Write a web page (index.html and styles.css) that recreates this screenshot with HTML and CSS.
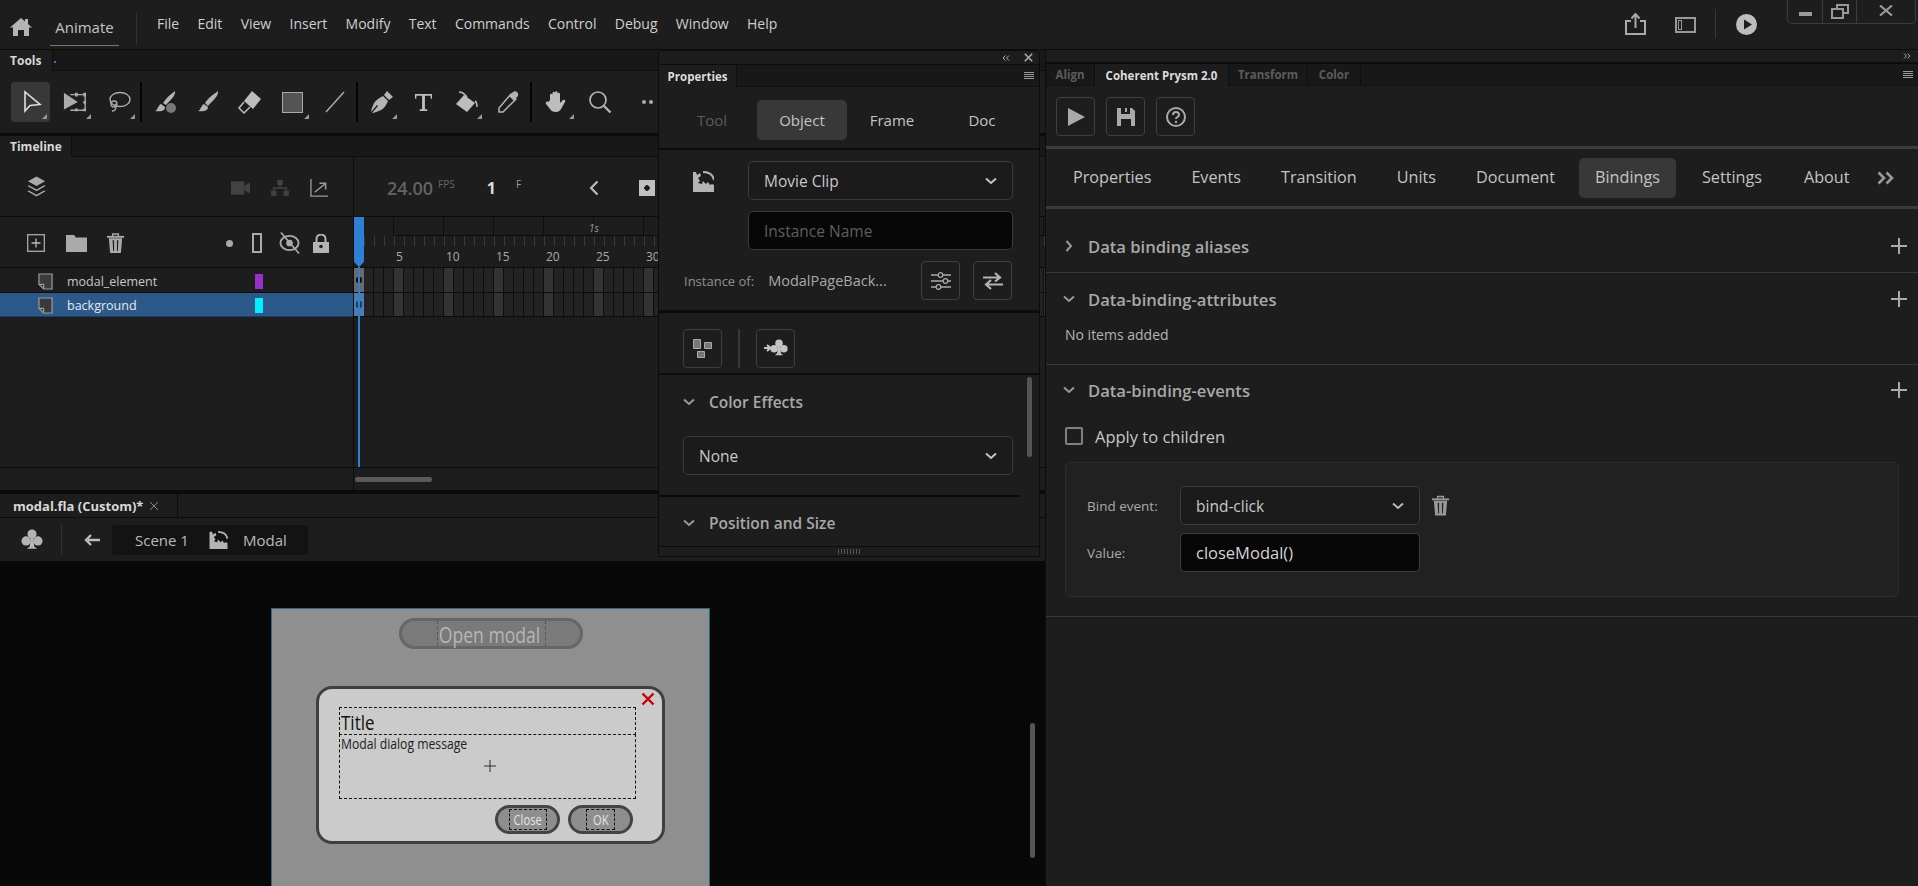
FILE: index.html
```html
<!DOCTYPE html>
<html lang="en">
<head>
<meta charset="utf-8">
<title>Animate</title>
<link rel="stylesheet" href="styles.css">
</head>
<body>
<svg class="defs" width="0" height="0" aria-hidden="true">
  <symbol id="chev" viewBox="0 0 12 8"><path d="M1 1.500l5 4.500 5-4.500" fill="none" stroke="currentColor" stroke-width="2"/></symbol>
  <symbol id="trash" viewBox="0 0 20 22"><path d="M1 4.500h18" stroke="currentColor" stroke-width="2"/><path d="M7 4V1.500h6V4" fill="none" stroke="currentColor" stroke-width="1.500"/><path d="M3 6l1.300 15.500h11.400L17 6zM7 8l.5 11.500h1L8.500 8zM11.500 8l0 11.500h1L13 8z" fill="currentColor" fill-rule="evenodd"/></symbol>
  <symbol id="clip" viewBox="0 0 21 21"><path d="M0 1h3l1 3 3-2 1 3-3 2 2 3-2 2 4 1 1-3 3 3 2-2 2 3 2-1 2 1v7H0z" fill="currentColor"/><path d="M10 1c6 0 10 3 11 8" fill="none" stroke="currentColor" stroke-width="2"/></symbol>
  <symbol id="club" viewBox="0 0 24 24"><circle cx="12" cy="5.500" r="5" fill="currentColor"/><circle cx="5.500" cy="13" r="5" fill="currentColor"/><circle cx="18.500" cy="13" r="5" fill="currentColor"/><path d="M10.500 8h3l1 11 3 2.500H6.500l3-2.500z" fill="currentColor"/></symbol>
  <symbol id="plus" viewBox="0 0 16 16"><path d="M8 0v16M0 8h16" stroke="currentColor" stroke-width="2"/></symbol>
  <symbol id="page" viewBox="0 0 16 18"><path d="M1 1h14v16H6l-5-5z" fill="#3a3a3a" stroke="#9a9a9a" stroke-width="1.300"/><path d="M1 12h5v5" fill="none" stroke="#9a9a9a" stroke-width="1.300"/></symbol>
</svg>

<div class="app">
  <header class="topbar">
    <svg class="home" viewBox="0 0 22 18"><path d="M0 9.500L11 0l4 3.500V1h3v5l4 3.500h-3V18h-5v-6H8v6H3V9.500z" fill="#b4b4b4"/></svg>
    <div class="appname">Animate</div>
    <div class="vsep"></div>
    <nav class="menu">
      <span>File</span><span>Edit</span><span>View</span><span>Insert</span><span>Modify</span><span>Text</span><span>Commands</span><span>Control</span><span>Debug</span><span>Window</span><span>Help</span>
    </nav>
    <div class="topright">
      <svg class="ic-share" viewBox="0 0 21 22"><path d="M6 8H1v13h19V8h-5" fill="none" stroke="#aaa" stroke-width="2"/><path d="M10.500 15V2M6.500 5.500l4-4.500 4 4.500" fill="none" stroke="#aaa" stroke-width="2"/></svg>
      <svg class="ic-panel" viewBox="0 0 21 16"><rect x="1" y="1" width="19" height="14" fill="none" stroke="#999" stroke-width="2"/><rect x="3.500" y="3.500" width="3" height="9" fill="none" stroke="#999"/></svg>
      <div class="vsep small"></div>
      <svg class="ic-play" viewBox="0 0 21 21"><circle cx="10.500" cy="10.500" r="10.500" fill="#bdbdbd"/><path d="M8 5.500l8 5-8 5z" fill="#1d1d1d"/></svg>
      <div class="winctl">
        <div class="wbtn w1"><i class="wmin"></i></div>
        <div class="wbtn w2"><svg viewBox="0 0 18 15" class="ic-restore"><path d="M6 4V1h11v8h-5M1 5h11v9H1z" fill="none" stroke="#999" stroke-width="2"/></svg></div>
        <div class="wbtn w3"><svg viewBox="0 0 14 11" class="ic-wclose"><path d="M1 .5l12 10M13 .5l-12 10" stroke="#999" stroke-width="2.200"/></svg></div>
      </div>
    </div>
  </header>

  <div class="workspace">
    <section class="left">
      <div class="panel tools">
        <div class="tabstrip"><div class="tab on tools-tab">Tools</div><i class="bluedot"></i></div>
        <div class="toolrow">
          <div class="tgroup g1">
            <div class="tool sel more"><svg viewBox="0 0 22 24"><path d="M5 2v19l5-5.500 10-1z" fill="none" stroke="#e0e0e0" stroke-width="1.600"/></svg></div>
            <div class="tool more"><svg viewBox="0 0 26 24"><path d="M1 2l15 10-15 8z" fill="#aaa"/><path d="M8 4h16v17H8" fill="none" stroke="#aaa" stroke-width="1.500"/><path d="M13 2h3v4h-3zM22 2h3v4h-3zM22 11h3v3h-3zM13 19h3v3h-3zM22 19h3v3h-3z" fill="#aaa"/></svg></div>
            <div class="tool more"><svg viewBox="0 0 24 24"><ellipse cx="13" cy="9.500" rx="10" ry="7" fill="none" stroke="#aaa" stroke-width="1.400"/><circle cx="7" cy="14" r="3" fill="none" stroke="#aaa" stroke-width="1.400"/><path d="M8 14c2 3 1 7-3 7" fill="none" stroke="#aaa" stroke-width="1.400"/></svg></div>
          </div>
          <i class="tsep"></i>
          <div class="tgroup g2">
            <div class="tool"><svg viewBox="0 0 24 24"><path d="M21 1c1 5-5 9-9 14l-3-2c3-5 8-9 12-12z" fill="#b4b4b4"/><path d="M7 14l4 3c0 4-4 5-10 4 3-1 3-6 6-7z" fill="#b4b4b4"/><circle cx="17" cy="18" r="5" fill="#777"/></svg></div>
            <div class="tool"><svg viewBox="0 0 24 24"><path d="M22 1c1 5-6 10-10 15l-3-3c3-5 9-9 13-12z" fill="#b4b4b4"/><path d="M8 14l4 3c0 4-5 5-10 4 3-1 3-6 6-7z" fill="#b4b4b4"/></svg></div>
            <div class="tool"><svg viewBox="0 0 24 24"><path d="M14 1l9 8-8 10-9-8z" fill="#bdbdbd"/><path d="M6 12l-5 6 5 5 6-6" fill="none" stroke="#bdbdbd" stroke-width="1.500"/></svg></div>
            <div class="tool more"><span class="rectsw"></span></div>
            <div class="tool"><svg viewBox="0 0 24 24"><path d="M3 22L21 2" stroke="#aaa" stroke-width="1.500"/></svg></div>
          </div>
          <i class="tsep"></i>
          <div class="tgroup g3">
            <div class="tool more"><svg viewBox="0 0 24 24"><path d="M14 6l5 5c-2 4-3 7-7 9-3 1-7 3-9 3l6-7-1-1-6 7c0-3 2-6 3-9 2-3 5-5 9-7z" fill="#b4b4b4"/><path d="M15 5l3-4 6 6-4 3z" fill="#b4b4b4"/></svg></div>
            <div class="tool"><svg class="ic-t" viewBox="0 0 20 20"><path d="M1 1h18v5h-1.500V3H11.500v14H14v2H6v-2h2.500V3H2.500v3H1z" fill="#bdbdbd"/></svg></div>
            <div class="tool more"><svg viewBox="0 0 24 24"><path d="M10 5l11 8-8 9-11-8z" fill="#bdbdbd"/><path d="M5 2c2 0 5 1 8 5M21 11c2 1 2 4 2 6" fill="none" stroke="#bdbdbd" stroke-width="1.500"/></svg></div>
            <div class="tool"><svg viewBox="0 0 24 24"><path d="M15 4l5 5L7 22H3v-4z" fill="none" stroke="#b4b4b4" stroke-width="1.500"/><path d="M13 6l5 5 1-2 3-3c1-3-2-6-5-4l-3 3z" fill="#b4b4b4"/></svg></div>
          </div>
          <i class="tsep"></i>
          <div class="tgroup g4">
            <div class="tool more"><svg viewBox="0 0 24 24"><path d="M5 10V5a1.200 1.200 0 012.500 0v4V3a1.200 1.200 0 012.500 0v6V2.500a1.200 1.200 0 012.500 0V9V4a1.200 1.200 0 012.500 0v9l3-3c1.500-1 3 .5 2 2l-4 7c-1 2-3 3-5 3-3 0-5-1-6-3l-4-5c-1-2 1-3 2.500-2z" fill="#bdbdbd"/></svg></div>
            <div class="tool"><svg viewBox="0 0 24 24"><circle cx="10" cy="10" r="8" fill="none" stroke="#b4b4b4" stroke-width="1.700"/><path d="M15.500 15.500l7 7" stroke="#b4b4b4" stroke-width="2.400"/></svg></div>
            <div class="tool dots"><i></i><i></i></div>
          </div>
        </div>
      </div>

      <div class="panel timeline">
        <div class="tabstrip"><div class="tab on tl-tab">Timeline</div></div>
        <div class="tl-body">
          <div class="tl-left">
            <div class="tl-head">
              <svg class="ic ic-layers" viewBox="0 0 20 24"><path d="M10 0l9 5-9 5-9-5z" fill="#aaa"/><path d="M2 9l8 4.500L18 9l1.500 1-9.500 5.500L.5 10z" fill="#aaa"/><path d="M2 14.500L10 19l8-4.500 1.500 1-9.500 5.500L.5 15.500z" fill="#aaa"/></svg>
              <span class="grow"></span>
              <svg class="ic ic-cam" viewBox="0 0 20 16"><rect y="1" width="14" height="14" fill="#424242"/><path d="M14 6l6-4v12l-6-4z" fill="#424242"/></svg>
              <svg class="ic ic-tree" viewBox="0 0 20 18"><path d="M7 0h6v6H7zM0 12h6v6H0zM14 12h6v6h-6z" fill="#424242"/><path d="M10 6v3M3 12V9h14v3" fill="none" stroke="#424242" stroke-width="1.500"/></svg>
              <svg class="ic ic-graph" viewBox="0 0 19 19"><path d="M1 0v18h18" fill="none" stroke="#999" stroke-width="1.400"/><path d="M5 14L16 5M10 4.500h6.500V11" fill="none" stroke="#999" stroke-width="1.600"/></svg>
            </div>
            <div class="lay-head">
              <svg class="ic ic-new" viewBox="0 0 18 18"><rect x=".7" y=".7" width="16.600" height="16.600" fill="none" stroke="#aaa" stroke-width="1.300"/><path d="M9 4.500v9M4.500 9h9" stroke="#bbb" stroke-width="1.300"/></svg>
              <svg class="ic ic-folder" viewBox="0 0 21 17"><path d="M0 0h8l2 2.500h11V17H0z" fill="#aaa"/></svg>
              <svg class="ic ic-trash" style="color:#aaa"><use href="#trash"/></svg>
              <span class="grow"></span>
              <i class="dot-h"></i>
              <i class="rect-h"></i>
              <svg class="ic ic-eye" viewBox="0 0 22 24"><ellipse cx="11" cy="12" rx="9.500" ry="7.500" fill="none" stroke="#aaa" stroke-width="2"/><circle cx="11" cy="12" r="3.500" fill="#aaa"/><path d="M2 1l19 22" stroke="#aaa" stroke-width="1.800"/></svg>
              <svg class="ic ic-lock" viewBox="0 0 16 19"><path d="M0 8h16v11H0z" fill="#b4b4b4"/><path d="M3.500 8V5a4.500 4.500 0 019 0v3" fill="none" stroke="#b4b4b4" stroke-width="2"/><circle cx="8" cy="12.500" r="1.800" fill="#1d1d1d"/></svg>
            </div>
            <div class="layer">
              <svg class="ic-page"><use href="#page"/></svg>
              <span class="lname">modal_element</span><i class="swatch purple"></i>
            </div>
            <div class="layer active">
              <svg class="ic-page"><use href="#page"/></svg>
              <span class="lname">background</span><i class="swatch cyan"></i>
            </div>
            <div class="tl-blank"></div>
            <div class="tl-foot"></div>
          </div>
          <div class="tl-right">
            <div class="tl-ctrl">
              <span class="fps">24.00</span><span class="fpsu">FPS</span>
              <span class="frame">1</span><span class="frameu">F</span>
              <svg class="ic-back" viewBox="0 0 10 16"><path d="M8.500 1.500L2 8l6.500 6.500" fill="none" stroke="#bbb" stroke-width="2.200"/></svg>
              <span class="keyic"></span>
            </div>
            <div class="ruler">
              <div class="r-major"><span>1s</span></div>
              <div class="r-minor"></div>
              <div class="r-labels"><span>5</span><span>10</span><span>15</span><span>20</span><span>25</span><span>30</span></div>
              <i class="playhead"></i>
            </div>
            <div class="frames row1"><i class="kf"></i></div>
            <div class="frames row2"><i class="kf"></i></div>
            <div class="tl-blank r"></div>
            <div class="tl-foot r"><i class="hthumb"></i></div>
            <i class="playline"></i>
          </div>
        </div>
      </div>

      <div class="doc">
        <div class="doctabs"><div class="doctab"><span>modal.fla (Custom)*</span><svg viewBox="0 0 10 10" class="ic-x"><path d="M1 1l8 8M9 1l-8 8" stroke="#888" stroke-width="1"/></svg></div></div>
        <div class="crumbs">
          <svg class="ic-club" style="color:#b4b4b4"><use href="#club"/></svg>
          <i class="csep"></i>
          <svg class="ic-arrow" viewBox="0 0 16 12"><path d="M16 6H4M7 1L2 6l5 5" fill="none" stroke="#bbb" stroke-width="2.400"/></svg>
          <div class="crumbbox"><span>Scene 1</span><svg class="ic-clip" style="color:#b4b4b4"><use href="#clip"/></svg><span>Modal</span></div>
        </div>
        <div class="stage">
          <div class="artboard">
            <div class="openbtn"><div class="openbox"><span class="cnd mid">Open modal</span></div></div>
            <div class="modal">
              <svg class="mclose" viewBox="0 0 14 14"><path d="M1.500 1.500l11 11M12.500 1.500l-11 11" stroke="#c80000" stroke-width="2.400"/></svg>
              <div class="mtitle"><span class="cnd t85">Title</span></div>
              <div class="mmsg"><span class="cnd t87">Modal dialog message</span><svg class="mcross" viewBox="0 0 13 13"><path d="M6.500 0v13M0 6.500h13" stroke="#222" stroke-width="1"/></svg></div>
              <div class="mbtns">
                <div class="mbtn"><div class="mbox"><span class="cnd mid">Close</span></div></div>
                <div class="mbtn"><div class="mbox ok"><span class="cnd mid">OK</span></div></div>
              </div>
            </div>
          </div>
          <i class="vthumb"></i>
        </div>
      </div>
    </section>

    <section class="right">
      <div class="rstrip"><svg class="ic-dbl" viewBox="0 0 8 6"><path d="M1 .5l2.500 2.500L1 5.500M4.500 .5L7 3 4.500 5.500" fill="none" stroke="#aaa"/></svg></div>
      <div class="rtabs">
        <div class="rtab dim">Align</div>
        <div class="rtab on">Coherent Prysm 2.0</div>
        <div class="rtab dim">Transform</div>
        <div class="rtab dim">Color</div>
        <span class="grow"></span>
        <div class="burger"><i></i><i></i><i></i><i></i></div>
      </div>
      <div class="rbtns">
        <div class="sqbtn"><svg viewBox="0 0 18 18" class="i18"><path d="M1 0l17 9-17 9z" fill="#aaa"/></svg></div>
        <div class="sqbtn"><svg viewBox="0 0 18 18" class="i18"><path d="M0 0h15l3 3v15H0zM4 0v6h9V0h-3v4H8V0zM4 11h10v7H4z" fill="#aaa" fill-rule="evenodd"/></svg></div>
        <div class="sqbtn"><svg viewBox="0 0 20 20" class="i20"><circle cx="10" cy="10" r="9" fill="none" stroke="#aaa" stroke-width="2"/><path d="M7 8a3 3 0 116 0c0 2-3 2-3 4" fill="none" stroke="#aaa" stroke-width="2"/><circle cx="10" cy="15" r="1.200" fill="#aaa"/></svg></div>
      </div>
      <nav class="rnav">
        <span>Properties</span><span>Events</span><span>Transition</span><span>Units</span><span>Document</span><span class="on">Bindings</span><span>Settings</span><span class="about">About</span>
        <svg class="ic-more" viewBox="0 0 17 14"><path d="M1.500 1.500L7 7l-5.500 5.500M9.500 1.500L15 7l-5.500 5.500" fill="none" stroke="#999" stroke-width="2.600"/></svg>
      </nav>
      <div class="sec s1">
        <div class="sec-h"><svg class="sch rot" style="color:#999"><use href="#chev"/></svg><b>Data binding aliases</b><svg class="splus" style="color:#aaa"><use href="#plus"/></svg></div>
      </div>
      <div class="sec s2">
        <div class="sec-h"><svg class="sch" style="color:#999"><use href="#chev"/></svg><b>Data-binding-attributes</b><svg class="splus" style="color:#aaa"><use href="#plus"/></svg></div>
        <div class="noitems">No items added</div>
      </div>
      <div class="sec s3">
        <div class="sec-h"><svg class="sch" style="color:#999"><use href="#chev"/></svg><b>Data-binding-events</b><svg class="splus" style="color:#aaa"><use href="#plus"/></svg></div>
        <label class="apply"><i class="cb"></i>Apply to children</label>
        <div class="card">
          <div class="frow"><span class="flabel">Bind event:</span><div class="select wide"><span>bind-click</span><svg class="selchev" style="color:#bbb"><use href="#chev"/></svg></div><svg class="ftrash" style="color:#999"><use href="#trash"/></svg></div>
          <div class="frow"><span class="flabel">Value:</span><div class="input wide val">closeModal()</div></div>
        </div>
      </div>
    </section>
  </div>

  <aside class="props">
    <div class="ptop"><svg class="ic-dbl" viewBox="0 0 8 6"><path d="M3.500 .5L1 3l2.500 2.500M7 .5L4.500 3 7 5.500" fill="none" stroke="#aaa"/></svg><svg class="ic-pclose" viewBox="0 0 9 9"><path d="M.8 .8l7.400 7.400M8.200 .8L.8 8.200" stroke="#aaa" stroke-width="1.600"/></svg></div>
    <div class="ptabs"><div class="ptab">Properties</div><span class="grow"></span><div class="burger"><i></i><i></i><i></i><i></i></div></div>
    <div class="pseg"><span class="dim">Tool</span><span class="on">Object</span><span>Frame</span><span>Doc</span></div>
    <div class="psec-type">
      <svg class="ic-pclip" style="color:#b4b4b4"><use href="#clip"/></svg>
      <div class="pfields">
        <div class="select"><span>Movie Clip</span><svg class="selchev" style="color:#c4c4c4"><use href="#chev"/></svg></div>
        <div class="input ph">Instance Name</div>
      </div>
    </div>
    <div class="pinst">
      <span class="ilabel">Instance of:</span><span class="iname">ModalPageBack...</span>
      <span class="grow"></span>
      <div class="sqbtn"><svg viewBox="0 0 22 18" class="i22"><path d="M1 3h7M13 3h8M1 9h12M18 9h3M1 15h5M11 15h10" stroke="#aaa" stroke-width="1.300"/><circle cx="10.500" cy="3" r="2.300" fill="none" stroke="#aaa" stroke-width="1.200"/><circle cx="15.500" cy="9" r="2.300" fill="none" stroke="#aaa" stroke-width="1.200"/><circle cx="8.500" cy="15" r="2.300" fill="none" stroke="#aaa" stroke-width="1.200"/></svg></div>
      <div class="sqbtn"><svg viewBox="0 0 20 18" class="i22"><path d="M0 5.500h17M12 1l5 4.500-5 4M20 12.500H3M8 8l-5 4.500L8 17" fill="none" stroke="#b4b4b4" stroke-width="2.200"/></svg></div>
    </div>
    <div class="picons">
      <div class="sqbtn"><svg viewBox="0 0 21 21" class="i21"><path d="M1.500 1.500h7v9h-7zM12.500 4.500h7v6h-7zM5.500 13.500h7v6h-7z" fill="#777" stroke="#aaa"/></svg></div>
      <i class="pvsep"></i>
      <div class="sqbtn"><svg viewBox="0 0 24 18" class="i24"><path d="M0 9h5M3 6l3.500 3L3 12" fill="none" stroke="#c4c4c4" stroke-width="2"/><g transform="translate(6 0) scale(.75)"><circle cx="12" cy="5.500" r="5" fill="#c4c4c4"/><circle cx="5.500" cy="13" r="5" fill="#c4c4c4"/><circle cx="18.500" cy="13" r="5" fill="#c4c4c4"/><path d="M10.500 8h3l1 11 3 2.500H6.500l3-2.500z" fill="#c4c4c4"/></g></svg></div>
    </div>
    <div class="pscroll">
      <div class="psech"><svg class="sch sm" style="color:#999"><use href="#chev"/></svg><b>Color Effects</b></div>
      <div class="select none"><span>None</span><svg class="selchev" style="color:#c4c4c4"><use href="#chev"/></svg></div>
      <div class="psech last"><svg class="sch sm" style="color:#999"><use href="#chev"/></svg><b>Position and Size</b></div>
      <i class="pthumb"></i>
    </div>
    <div class="pfoot"><i class="grip"></i></div>
  </aside>
</div>
</body>
</html>
```

FILE: styles.css
```css
* { box-sizing: border-box; }
html, body { margin: 0; height: 100%; background: #1d1d1d; overflow: hidden; }
body { font-family: "Open Sans", "Noto Sans", sans-serif; color: #c8c8c8; }
.defs { position: absolute; }
i { display: block; }
svg { display: block; flex: none; }
.grow { flex: 1; }

.app { position: relative; width: 1918px; height: 886px; display: flex; flex-direction: column; }

/* top bar */
.topbar { height: 50px; flex: none; display: flex; align-items: flex-start; border-bottom: 1px solid #0b0b0b; background: #1d1d1d; }
.home { width: 22px; height: 18px; margin: 18px 0 0 10px; }
.appname { margin: 0 0 0 18px; padding: 16px 0 0; height: 46px; width: 69px; text-align: center; font-size: 15px; line-height: 22px; border-bottom: 1px solid #777; color: #c4c4c4; }
.vsep { width: 1px; height: 32px; background: #333; margin: 13px 0 0 17px; }
.menu { display: flex; margin: 13px 0 0 20px; font-size: 14px; line-height: 22px; color: #cfcfcf; }
.menu span { margin-right: 18.300px; }
.topright { margin-left: auto; display: flex; align-items: flex-start; }
.ic-share { width: 21px; height: 22px; margin: 13px 0 0 0; }
.ic-panel { width: 21px; height: 16px; margin: 17px 0 0 29px; }
.vsep.small { height: 29px; margin: 9px 0 0 19px; background: #383838; }
.ic-play { width: 21px; height: 21px; margin: 14px 0 0 20px; }
.winctl { display: flex; height: 24px; margin: 0 2px 0 30px; border: 1px solid #3c3c3c; border-top: 0; border-radius: 0 0 5px 5px; }
.wbtn { display: flex; align-items: center; justify-content: center; height: 23px; border-right: 1px solid #3c3c3c; }
.w1 { width: 35px; } .w2 { width: 34px; } .w3 { width: 58px; border-right: 0; }
.wmin { width: 13px; height: 4px; background: #999; margin-top: 5px; }
.ic-restore { width: 18px; height: 15px; }
.ic-wclose { width: 14px; height: 11px; margin-bottom: 3px; }

/* workspace */
.workspace { flex: 1; display: flex; min-height: 0; }
.left { width: 1045px; flex: none; display: flex; flex-direction: column; background: #0b0b0b; overflow: hidden; }
.panel { flex: none; background: #1d1d1d; }

.tabstrip { height: 21px; display: flex; align-items: stretch; background: #181818; border-bottom: 1px solid #0e0e0e; }
.tab { display: flex; align-items: center; font-size: 12px; font-weight: 700; color: #d8d8d8; background: #1d1d1d; border-right: 1px solid #0e0e0e; margin-bottom: -1px; }
.tools-tab { width: 53px; padding-left: 10px; }
.tl-tab { width: 72px; padding-left: 10px; }
.bluedot { width: 2px; height: 2px; background: #2680d0; margin: 11px 0 0 1px; }

/* tools */
.tools { height: 83px; border-bottom: 0; }
.toolrow { height: 62px; display: flex; align-items: center; padding-left: 11px; }
.tgroup { display: flex; }
.g1 { gap: 5px; } .g2 { gap: 3.250px; margin-left: 4px; } .g3 { gap: 3.500px; margin-left: 3px; } .g4 { gap: 4px; margin-left: 6px; }
.tsep { width: 2px; height: 40px; background: #050505; margin-left: 2px; }
.tool { position: relative; width: 39px; height: 40px; display: flex; align-items: center; justify-content: center; border-radius: 4px; }
.tool svg { width: 24px; height: 24px; }
.tool svg.ic-t { width: 19px; height: 19px; }
.tool.sel { background: #383838; }
.tool.more::after { content: ""; position: absolute; right: 3px; bottom: 3px; width: 0; height: 0; border-left: 5px solid transparent; border-bottom: 5px solid #999; }
.rectsw { width: 21px; height: 21px; background: #545454; border: 1.500px solid #aaa; }
.dots { gap: 3px; margin-left: 9px; width: 30px; }
.dots i { width: 4px; height: 4px; border-radius: 50%; background: #aaa; }

/* timeline */
.timeline { margin-top: 3px; height: 354px; }
.tl-body { display: flex; height: 333px; }
.tl-left { width: 354px; flex: none; display: flex; flex-direction: column; border-right: 1px solid #0c0c0c; }
.tl-right { position: relative; flex: 1; display: flex; flex-direction: column; min-width: 0; }
.tl-head, .tl-ctrl { height: 60px; flex: none; display: flex; align-items: center; padding-top: 2px; border-bottom: 1px solid #0c0c0c; }
.tl-head { padding-left: 27px; padding-right: 25px; }
.ic-layers { width: 19px; height: 24px; }
.ic-cam { width: 19px; height: 16px; margin-right: 21px; }
.ic-tree { width: 18px; height: 16px; margin-right: 21px; }
.ic-graph { width: 18px; height: 18px; }
.lay-head { height: 51px; flex: none; display: flex; align-items: center; padding: 2px 24px 0 27px; border-bottom: 1px solid #0c0c0c; }
.ic-new { width: 18px; height: 18px; }
.ic-folder { width: 21px; height: 17px; margin-left: 21px; }
.ic-trash { width: 19px; height: 22px; margin-left: 19px; }
.dot-h { width: 7px; height: 7px; border-radius: 50%; background: #aaa; }
.rect-h { width: 10px; height: 20px; border: 2px solid #aaa; margin-left: 19px; }
.ic-eye { width: 21px; height: 24px; margin-left: 17px; }
.ic-lock { width: 16px; height: 19px; margin-left: 13px; }
.layer { height: 25px; flex: none; display: flex; align-items: center; padding: 2px 0 0 38px; border-bottom: 1px solid #0c0c0c; font-size: 12.500px; color: #c8c8c8; }
.layer.active { height: 24px; background: #2b5a8a; color: #e8e8e8; border-bottom: 1px solid #1c3d60; }
.ic-page { width: 15px; height: 17px; }
.lname { margin-left: 14px; width: 188px; }
.swatch { width: 8px; height: 15px; }
.purple { background: #9a30c8; }
.cyan { background: #00f0ff; }
.tl-blank { height: 151px; flex: none; border-bottom: 1px solid #0c0c0c; }
.tl-foot { height: 22px; flex: none; }
.tl-foot.r { display: flex; align-items: center; }
.hthumb { width: 77px; height: 5px; border-radius: 3px; background: #5a5a5a; margin: 0 0 0 1px; }

.tl-ctrl { position: relative; padding-left: 33px; }
.fps { font-size: 18px; font-weight: 600; color: #636363; }
.fpsu { font-size: 10px; color: #666; margin: -8px 0 0 5px; }
.frame { font-size: 16px; font-weight: 700; color: #dcdcdc; margin-left: 32px; }
.frameu { font-size: 10px; color: #999; margin: -8px 0 0 20px; }
.ic-back { width: 10px; height: 16px; margin-left: 68px; }
.keyic { width: 16px; height: 16px; background: radial-gradient(circle, #1d1d1d 0 2.500px, #c0c0c0 3px); margin-left: 40px; }

.ruler { position: relative; height: 51px; flex: none; border-bottom: 1px solid #0c0c0c; padding-left: 10px; }
.r-major { height: 19px; border-bottom: 1px solid #0c0c0c; background-image: repeating-linear-gradient(90deg, #101010 0 1px, transparent 1px 50px); margin-left: 29px; font-size: 10px; font-style: italic; color: #999; line-height: 22px; }
.r-major span { margin-left: 196px; }
.r-minor { height: 10px; background-image: repeating-linear-gradient(90deg, #3a3a3a 0 1px, transparent 1px 10px); }
.r-labels { display: flex; margin: 3px 0 0 29px; font-size: 12px; line-height: 16px; color: #aaa; }
.r-labels span { width: 50px; padding-left: 3px; }
.playhead { position: absolute; left: 0; top: 0; width: 10px; height: 50px; background: #2f7fd6; clip-path: polygon(0 0, 100% 0, 100% 90%, 50% 100%, 0 90%); }
.frames { height: 25px; flex: none; border-bottom: 1px solid #0c0c0c; background-color: #232323;
  background-image: repeating-linear-gradient(90deg, transparent 0 9px, #0e0e0e 9px 10px), repeating-linear-gradient(90deg, #333 0 10px, transparent 10px 50px);
  background-position: 0 0, 40px 0; }
.frames.row2 { height: 24px; }
.kf { width: 10px; height: 100%; background: radial-gradient(ellipse 3px 4px at 5px 50%, #111 99%, #6a6a6a 100%); }
.row2 .kf { background: radial-gradient(ellipse 3px 4px at 5px 50%, #1c3d60 99%, #4d7eb0 100%); }
.playline { position: absolute; left: 4px; top: 110px; width: 1.500px; height: 200px; background: #2f7fd6; }
.tl-blank.r { background: #1d1d1d; }

/* doc */
.doc { margin-top: 4px; flex: 1; display: flex; flex-direction: column; min-height: 0; }
.doctabs { height: 24px; flex: none; display: flex; background: #1d1d1d; border-bottom: 1px solid #0c0c0c; }
.doctab { width: 178px; display: flex; align-items: center; padding-left: 13px; font-size: 13px; font-weight: 700; color: #d8d8d8; border-right: 1px solid #0c0c0c; }
.ic-x { width: 10px; height: 10px; margin-left: 6px; }
.crumbs { height: 43px; flex: none; display: flex; align-items: center; background: #1d1d1d; padding-left: 20px; }
.ic-club { width: 24px; height: 22px; }
.csep { width: 1px; height: 29px; background: #333; margin-left: 17px; }
.ic-arrow { width: 16px; height: 12px; margin-left: 22px; }
.crumbbox { display: flex; align-items: center; height: 30px; width: 196px; background: #131313; border-radius: 3px; margin: 1px 0 0 12px; padding-left: 23px; font-size: 15px; color: #bbb; }
.ic-clip { width: 19px; height: 18px; margin: 0 15px 0 20px; }
.stage { position: relative; flex: 1; background: #080808; padding: 47px 0 0 271px; overflow: hidden; }
.vthumb { position: absolute; left: 1030px; top: 162px; width: 5px; height: 135px; border-radius: 3px; background: #555; }
.artboard { width: 439px; height: 300px; background: #8f8f8f; border: 1px solid #1f6a92; border-bottom: 0; padding-top: 9px; }
.cnd { display: inline-block; white-space: nowrap; transform-origin: left center; }
.cnd.mid { transform-origin: center; transform: scaleX(.8); }
.t85 { transform: scaleX(.85); }
.t87 { transform: scaleX(.87); }
.openbtn { width: 184px; height: 31px; margin-left: 127px; border: 3px solid #666; border-radius: 16px; background: #7a7a7a; display: flex; justify-content: center; }
.openbox { width: 109px; margin-left: 1px; padding-right: 4px; display: flex; justify-content: center; font-size: 22px; line-height: 26px; color: #b6b6b6; border-left: 1px dashed #555; border-right: 1px dashed #555; }
.modal { position: relative; width: 349px; height: 158px; margin: 37px 0 0 44px; padding: 18px 0 0 20px; background: #cbcbcb; border: 3px solid #3f3f3f; border-radius: 16px; }
.mclose { position: absolute; right: 7px; top: 3px; width: 14px; height: 14px; }
.mtitle { width: 297px; height: 28px; border: 1px dashed #111; padding-left: 1px; font-size: 20px; line-height: 29px; color: #111; }
.mmsg { position: relative; width: 297px; height: 65px; margin-top: -1px; border: 1px dashed #111; border-top: 0; padding-left: 1px; font-size: 14px; line-height: 19px; color: #222; }
.mcross { position: absolute; left: 144px; top: 26px; width: 12px; height: 12px; }
.mbtns { display: flex; justify-content: flex-end; gap: 8px; margin: 6px 0 0 0; width: 294px; }
.mbtn { width: 65px; height: 29px; background: #8e8e8e; border: 3px solid #444; border-radius: 15px; display: flex; align-items: center; justify-content: center; font-size: 14px; color: #e4e4e4; }
.mbox { display: flex; justify-content: center; border: 1px dashed #111; width: 38px; height: 21px; line-height: 20px; }
.mbox.ok { width: 29px; }

/* right */
.right { flex: 1; min-width: 0; display: flex; flex-direction: column; border-left: 1px solid #0c0c0c; background: #1d1d1d; }
.rstrip { height: 14px; flex: none; display: flex; justify-content: flex-end; align-items: center; padding-right: 7px; border-bottom: 2px solid #0c0c0c; }
.ic-dbl { width: 8px; height: 6px; }
.rtabs { height: 22px; flex: none; display: flex; background: #181818; border-bottom: 1px solid #111; font-size: 11.500px; font-weight: 700; }
.rtab { display: flex; align-items: center; justify-content: center; border-right: 1px solid #0e0e0e; }
.rtab:nth-child(1) { width: 49px; }
.rtab:nth-child(2) { width: 134px; background: #1d1d1d; color: #dcdcdc; margin-bottom: -1px; }
.rtab:nth-child(3) { width: 79px; }
.rtab:nth-child(4) { width: 53px; }
.rtab.dim { color: #5c5c5c; }
.burger { display: flex; flex-direction: column; gap: 1px; align-self: center; margin-right: 5px; }
.burger i { width: 10px; height: 1px; background: #999; }
.rbtns { height: 63px; flex: none; display: flex; align-items: flex-start; gap: 11px; padding: 11px 0 0 10px; border-bottom: 3px solid #3a3a3a; }
.sqbtn { width: 39px; height: 39px; flex: none; display: flex; align-items: center; justify-content: center; border: 1px solid #3f3f3f; border-radius: 4px; }
.i18 { width: 18px; height: 18px; } .i20 { width: 20px; height: 20px; } .i21 { width: 21px; height: 21px; } .i22 { width: 22px; height: 18px; } .i24 { width: 24px; height: 18px; }
.rnav { height: 60px; flex: none; display: flex; align-items: center; gap: 8px; padding: 1px 0 0 11px; border-bottom: 3px solid #3a3a3a; font-size: 16.200px; color: #c4c4c4; }
.rnav span { height: 40px; line-height: 38px; padding: 0 16px; border-radius: 5px; }
.rnav span.on { background: #383838; margin-right: 2px; }
.rnav span.about { margin-left: 2px; }
.ic-more { width: 17px; height: 14px; margin-left: 3px; }
.sec { border-bottom: 1px solid #383838; padding: 0 19px 0 17px; }
.sec-h { display: flex; align-items: center; height: 24px; }
.sec-h b { font-size: 16.600px; font-weight: 600; color: #a8a8a8; }
.psech b { font-size: 15.500px; font-weight: 600; color: #a8a8a8; }
.sch { width: 12px; height: 8px; margin-right: 13px; }
.sch.rot { transform: rotate(-90deg); }
.splus { width: 16px; height: 16px; margin-left: auto; margin-right: -8px; }
.s1 { height: 64px; padding-top: 25px; }
.s2 { height: 92px; padding-top: 14px; }
.noitems { margin: 14px 0 0 2px; font-size: 14px; color: #b4b4b4; }
.s3 { height: 252px; padding-top: 13px; }
.apply { display: flex; align-items: center; margin: 22px 0 0 2px; font-size: 16.500px; color: #c8c8c8; height: 24px; }
.cb { width: 18px; height: 18px; border: 2px solid #808080; border-radius: 2px; margin-right: 12px; }
.card { margin: 14px 0 0 2px; height: 135px; background: #212121; border: 1px solid #2d2d2d; border-radius: 5px; padding: 23px 0 0 21px; }
.frow { display: flex; align-items: center; margin-bottom: 8px; }
.flabel { width: 93px; font-size: 13.500px; color: #aaa; }
.select, .input { height: 39px; border: 1px solid #3b3b3b; border-radius: 5px; display: flex; align-items: center; padding: 0 15px; font-size: 15.500px; color: #c8c8c8; }
.select { background: #1b1b1b; justify-content: space-between; }
.input { background: #070707; }
.wide { width: 240px; }
.val { color: #d4d4d4; font-size: 16.500px; }
.selchev { width: 12px; height: 8px; }
.ftrash { width: 19px; height: 21px; margin-left: 11px; }

/* floating properties */
.props { position: absolute; left: 658px; top: 50px; width: 382px; height: 507px; display: flex; flex-direction: column; background: #1d1d1d; border: 1px solid #0c0c0c; border-radius: 5px 5px 0 0; }
.ptop { height: 14px; flex: none; display: flex; justify-content: flex-end; align-items: center; padding-right: 6px; gap: 14px; border-bottom: 1px solid #0c0c0c; }
.ic-pclose { width: 9px; height: 9px; }
.ptabs { height: 22px; flex: none; display: flex; background: #181818; border-bottom: 1px solid #111; }
.ptab { width: 78px; display: flex; align-items: center; justify-content: center; font-size: 11.500px; font-weight: 700; color: #dcdcdc; background: #1d1d1d; border-right: 1px solid #0e0e0e; margin-bottom: -1px; }
.ptabs .burger { margin-right: 5px; }
.pseg { height: 63px; flex: none; display: flex; align-items: flex-start; padding: 13px 0 0 8px; border-bottom: 2px solid #0c0c0c; font-size: 15px; color: #c4c4c4; }
.pseg span { width: 90px; height: 40px; line-height: 40px; text-align: center; border-radius: 5px; }
.pseg .on { background: #383838; }
.pseg .dim { color: #5c5c5c; }
.psec-type { flex: none; display: flex; padding: 11px 0 0 34px; }
.ic-pclip { width: 21px; height: 21px; margin-top: 10px; }
.pfields { display: flex; flex-direction: column; gap: 11px; width: 265px; margin-left: 34px; }
.ph { color: #5e5e5e; }
.pinst { flex: none; display: flex; align-items: center; gap: 13px; height: 39px; margin-top: 11px; padding: 0 27px 0 25px; font-size: 13.500px; }
.ilabel { font-size: 13px; color: #909090; }
.iname { margin-left: 1px; color: #aaa; font-size: 14.500px; }
.picons { flex: none; display: flex; align-items: center; margin-top: 10px; height: 65px; padding: 10px 0 0 24px; border-top: 3px solid #0c0c0c; border-bottom: 2px solid #0c0c0c; }
.pvsep { width: 2px; height: 39px; background: #383838; margin: 0 16px; }
.pscroll { position: relative; flex: 1; min-height: 0; padding: 0 26px 0 24px; }
.psech { display: flex; align-items: center; height: 24px; margin-top: 15px; }
.sch.sm { margin-right: 14px; }
.select.none { margin-top: 22px; }
.psech.last { margin: 20px -6px 0 -24px; padding: 4px 0 0 24px; height: 50px; border-top: 2px solid #090909; }
.pthumb { position: absolute; right: 7px; top: 2px; width: 5px; height: 80px; border-radius: 3px; background: #555; }
.pfoot { height: 10px; flex: none; border-top: 1px solid #0c0c0c; display: flex; justify-content: center; align-items: center; }
.grip { width: 22px; height: 5px; background-image: repeating-linear-gradient(90deg, #555 0 1px, transparent 1px 3px); }
```
